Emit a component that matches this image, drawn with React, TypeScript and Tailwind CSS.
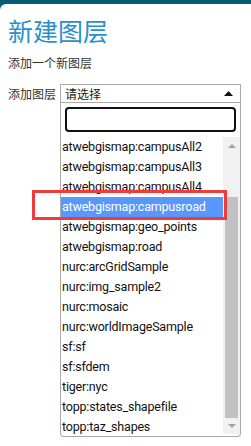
import React from "react";

const items = [
  "atwebgismap:campusAll2",
  "atwebgismap:campusAll3",
  "atwebgismap:campusAll4",
  "atwebgismap:campusroad",
  "atwebgismap:geo_points",
  "atwebgismap:road",
  "nurc:arcGridSample",
  "nurc:img_sample2",
  "nurc:mosaic",
  "nurc:worldImageSample",
  "sf:sf",
  "sf:sfdem",
  "tiger:nyc",
  "topp:states_shapefile",
  "topp:taz_shapes",
];

const cjk = { fontFamily: '"Noto Sans CJK SC", sans-serif' };

export default function App() {
  return (
    <div
      className="relative w-[251px] h-[446px] overflow-hidden bg-gradient-to-b from-[#075c78] to-[#0d7390]"
      style={{ fontFamily: 'Roboto, "Noto Sans CJK SC", sans-serif' }}
    >
      <div className="mt-[4px] h-[442px] bg-white rounded-tl-[6px] pl-[8px] pt-[10px]">
        <div className="text-[25px] leading-[32px] text-[#2b8fca]" style={cjk}>新建图层</div>
        <div className="mt-[9px] text-[12px] leading-[16px] text-[#333]" style={cjk}>添加一个新图层</div>
        <div className="mt-[13px] flex items-start">
          <div className="w-[52px] pt-[2px] text-[12px] leading-[16px] text-[#333]" style={cjk}>添加图层</div>
          <div className="w-[181px]">
            <div className="h-[19px] border border-[#aaa] flex items-center justify-between pl-[4px] pr-[7px] bg-white">
              <span className="text-[12px] leading-[16px] text-[#222]" style={cjk}>请选择</span>
              <svg width="9" height="5" viewBox="0 0 9 5"><path d="M0 5 L4.5 0 L9 5 Z" fill="#111" /></svg>
            </div>
            <div className="h-[334px] border border-t-0 border-[#aaa] rounded-b-[4px] bg-white flex flex-col">
              <div className="px-[4px] pt-[4px] pb-[5px]">
                <div className="h-[25px] border-2 border-[#111] rounded-[4px]"></div>
              </div>
              <div className="flex flex-1 min-h-0">
                <div className="flex-1 overflow-hidden">
                  {items.map((t, i) => (
                    <div
                      key={t}
                      className={
                        "h-[20px] pl-[1px] text-[12.5px] tracking-[-0.2px] leading-[20px] whitespace-nowrap " +
                        (i === 3 ? "bg-[#5897fb] text-white" : "text-[#111]")
                      }
                    >
                      {t}
                    </div>
                  ))}
                </div>
                <div className="w-[17px] bg-[#f1f1f1] flex flex-col items-center mb-[2px]">
                  <div className="h-[17px] flex items-center justify-center">
                    <svg width="8" height="4" viewBox="0 0 8 4"><path d="M0 4 L4 0 L8 4 Z" fill="#a3a3a3" /></svg>
                  </div>
                  <div className="h-[43px]"></div>
                  <div className="w-[13px] h-[221px] bg-[#c1c1c1]"></div>
                  <div className="flex-1 flex items-center justify-center">
                    <svg width="8" height="4" viewBox="0 0 8 4"><path d="M0 0 L8 0 L4 4 Z" fill="#a3a3a3" /></svg>
                  </div>
                </div>
              </div>
            </div>
          </div>
        </div>
      </div>
      <div className="absolute left-[32px] top-[190px] w-[195px] h-[30px] border-[3px] border-[#f23a3a]"></div>
    </div>
  );
}
